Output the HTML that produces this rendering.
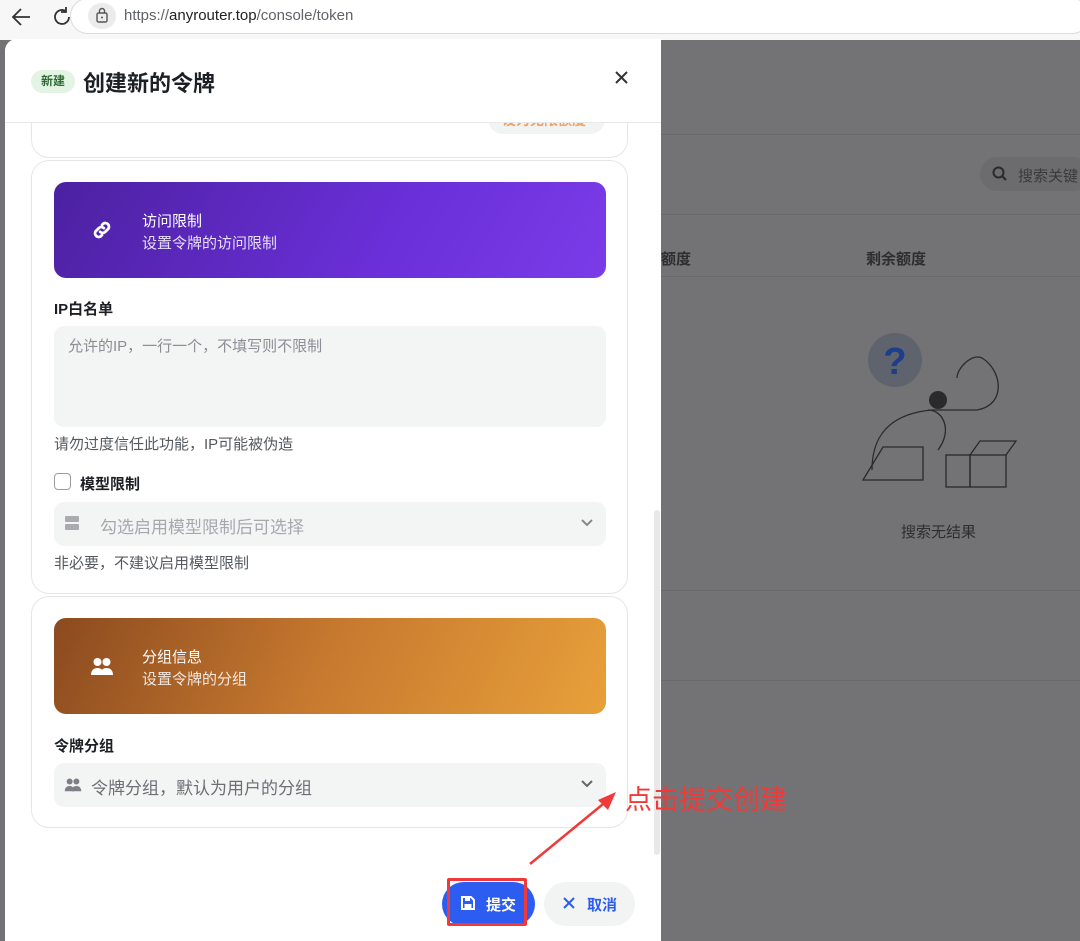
<!DOCTYPE html>
<html><head><meta charset="utf-8"><style>
*{margin:0;padding:0;box-sizing:border-box}
body{width:1080px;height:941px;overflow:hidden;position:relative;background:#737375;font-family:"Liberation Sans","Noto Sans CJK SC",sans-serif;color:#1c1f23}
.a{position:absolute}
.card{position:absolute;left:31px;width:597px;background:#fff;border:1px solid #e6e6e8;border-radius:18px}
.hdr{position:absolute;left:54px;width:552px;height:96px;border-radius:12px;color:#fff}
.hdr .t1{position:absolute;left:88px;top:28px;font-size:15px}
.hdr .t2{position:absolute;left:88px;top:50px;font-size:15px;opacity:.85}
.lbl{font-size:15px;font-weight:bold;color:#1c1f23}
.help{font-size:15px;color:#555a60}
.sel{position:absolute;left:54px;width:552px;height:44px;background:#f3f4f4;border-radius:10px;font-size:17px}
</style></head><body>
<div class="a" style="left:0;top:0;width:1080px;height:40px;background:#f7f7f7"></div>
<svg class="a" style="left:10px;top:6px" width="24" height="22" viewBox="0 0 24 22"><path d="M20 11H4M11 3l-8 8 8 8" fill="none" stroke="#333" stroke-width="1.8"/></svg>
<svg class="a" style="left:50px;top:5px" width="24" height="24" viewBox="0 0 24 24"><path d="M19 12a7 7 0 1 1-3-5.8M16 2v5h-5" fill="none" stroke="#333" stroke-width="1.8"/></svg>
<div class="a" style="left:70px;top:-2px;width:1020px;height:36px;border:1px solid #ddd;border-radius:18px;background:#fff"></div>
<div class="a" style="left:88px;top:3px;width:28px;height:26px;border-radius:13px;background:#ececec"></div>
<svg class="a" style="left:95px;top:7px" width="14" height="16" viewBox="0 0 14 16"><rect x="2" y="6" width="10" height="9" rx="1.5" fill="none" stroke="#555" stroke-width="1.4"/><path d="M4.5 6V4a2.5 2.5 0 0 1 5 0v2" fill="none" stroke="#555" stroke-width="1.4"/><circle cx="7" cy="10.5" r="1" fill="#555"/></svg>
<div class="a" style="left:124px;top:7px;font-size:15px;color:#5f6368">https://<span style="color:#222">anyrouter.top</span>/console/token</div>

<div class="a" style="left:661px;top:134px;width:419px;height:1px;background:#6a6a6c"></div>
<div class="a" style="left:980px;top:157px;width:110px;height:34px;border-radius:17px;background:#6c6c6e"></div>
<svg class="a" style="left:992px;top:166px" width="16" height="16" viewBox="0 0 16 16"><circle cx="6.5" cy="6.5" r="5" fill="none" stroke="#2a2a2c" stroke-width="2"/><path d="M10 10l4 4" stroke="#2a2a2c" stroke-width="2.2"/></svg>
<div class="a" style="left:1018px;top:165px;font-size:15px;color:#3a3a3c;white-space:nowrap">搜索关键</div>
<div class="a" style="left:661px;top:214px;width:419px;height:1px;background:#6a6a6c"></div>
<div class="a" style="left:661px;top:248px;font-size:15px;font-weight:bold;color:#2e2e30">额度</div>
<div class="a" style="left:866px;top:248px;font-size:15px;font-weight:bold;color:#2e2e30">剩余额度</div>
<div class="a" style="left:661px;top:276px;width:419px;height:1px;background:#6a6a6c"></div>
<svg class="a" style="left:860px;top:330px" width="160" height="160" viewBox="0 0 160 160"><circle cx="35" cy="30" r="27" fill="#5e636d"/><text x="35" y="44" font-size="38" font-weight="bold" fill="#1e3e8c" text-anchor="middle" font-family="Liberation Sans">?</text><g fill="none" stroke="#2a2a2c" stroke-width="1.3"><path d="M3 150l20-33 40 0 0 33z"/><path d="M12 140c0-20 5-55 60-60l45 0c30 -5 25-40 5-52-10-5-25 10-25 20"/><path d="M68 80c15 0 25 20 10 40"/><rect x="86" y="125" width="24" height="32"/><rect x="110" y="125" width="36" height="32"/><path d="M110 125l10-14h36l-10 14"/></g><circle cx="78" cy="70" r="9" fill="#2a2a2c"/></svg>
<div class="a" style="left:901px;top:521px;font-size:15px;color:#2e2e30">搜索无结果</div>
<div class="a" style="left:661px;top:590px;width:419px;height:1px;background:#6a6a6c"></div>
<div class="a" style="left:661px;top:680px;width:419px;height:1px;background:#6a6a6c"></div>

<div class="a" style="left:5px;top:39px;width:656px;height:902px;background:#fff;border-radius:12px 0 0 0"></div>
<div class="a" style="left:654px;top:510px;width:6px;height:345px;background:#e8e8e8;border-radius:3px"></div>

<div class="card" style="top:80px;height:78px"></div>
<div class="a" style="left:488px;top:104px;width:117px;height:30px;border-radius:15px;background:#f2f3f3"></div>
<div class="a" style="left:502px;top:110px;font-size:14px;color:#f0a060;font-weight:bold">设为无限额度</div>
<div class="a" style="left:5px;top:39px;width:656px;height:84px;background:#fff;border-bottom:1px solid #e8e8e8;border-radius:12px 0 0 0"></div>
<div class="a" style="left:31px;top:70px;width:44px;height:23px;border-radius:12px;background:#e3f3e4;color:#2e6b33;font-size:12px;font-weight:bold;text-align:center;line-height:23px">新建</div>
<div class="a" style="left:83px;top:66px;font-size:22px;font-weight:bold">创建新的令牌</div>
<svg class="a" style="left:614px;top:70px" width="15" height="15" viewBox="0 0 15 15"><path d="M2 2l11 11M13 2L2 13" stroke="#333" stroke-width="2"/></svg>

<div class="card" style="top:160px;height:434px"></div>
<div class="hdr" style="top:182px;background:linear-gradient(120deg,#4c21a0,#6a2fd8 60%,#7a3ce8)">
<svg class="a" style="left:37px;top:37px" width="22" height="22" viewBox="0 0 24 24"><g fill="none" stroke="#fff" stroke-width="3" stroke-linecap="round"><path d="M10 14a4 4 0 0 0 5.5 0l3.5-3.5a4 4 0 0 0-5.5-5.5L12 6.5"/><path d="M14 10a4 4 0 0 0-5.5 0L5 13.5a4 4 0 0 0 5.5 5.5L12 17.5"/></g></svg>
<div class="t1">访问限制</div><div class="t2">设置令牌的访问限制</div></div>
<div class="a lbl" style="left:54px;top:298px">IP白名单</div>
<div class="a" style="left:54px;top:326px;width:552px;height:101px;background:#f3f4f4;border-radius:10px"></div>
<div class="a" style="left:68px;top:335px;font-size:15px;color:#8a8f95">允许的IP，一行一个，不填写则不限制</div>
<div class="a help" style="left:54px;top:433px">请勿过度信任此功能，IP可能被伪造</div>
<div class="a" style="left:54px;top:473px;width:17px;height:17px;border:1.5px solid #9a9ea4;border-radius:4px"></div>
<div class="a lbl" style="left:80px;top:473px">模型限制</div>
<div class="sel" style="top:502px">
<div class="a" style="left:11px;top:14px;width:14px;height:6px;background:#a8acb1;border-radius:1px"></div>
<div class="a" style="left:11px;top:22px;width:14px;height:6px;background:#a8acb1;border-radius:1px"></div>
<div class="a" style="left:46px;top:11px;color:#a5a9ae">勾选启用模型限制后可选择</div>
<svg class="a" style="left:526px;top:16px" width="14" height="10" viewBox="0 0 14 10"><path d="M2 2l5 5 5-5" fill="none" stroke="#888" stroke-width="2"/></svg></div>
<div class="a help" style="left:54px;top:552px">非必要，不建议启用模型限制</div>

<div class="card" style="top:596px;height:232px"></div>
<div class="hdr" style="top:618px;background:linear-gradient(115deg,#8b4a1f,#c87a2f 50%,#e8a03a)">
<svg class="a" style="left:36px;top:38px" width="24" height="20" viewBox="0 0 24 20"><g fill="#fff"><circle cx="7.5" cy="6" r="4"/><circle cx="16.5" cy="6" r="4"/><path d="M1 19c0-5 3-7 6.5-7s6 2 6 7z"/><path d="M10.5 19c0-5 2.5-7 6-7s6.5 2 6.5 7z"/></g></svg>
<div class="t1">分组信息</div><div class="t2">设置令牌的分组</div></div>
<div class="a lbl" style="left:54px;top:735px">令牌分组</div>
<div class="sel" style="top:763px">
<svg class="a" style="left:10px;top:14px" width="18" height="15" viewBox="0 0 24 20"><g fill="#7d8187"><circle cx="7.5" cy="6" r="4"/><circle cx="16.5" cy="6" r="4"/><path d="M1 19c0-5 3-7 6.5-7s6 2 6 7z"/><path d="M10.5 19c0-5 2.5-7 6-7s6.5 2 6.5 7z"/></g></svg>
<div class="a" style="left:37px;top:11px;color:#6b7075">令牌分组，默认为用户的分组</div>
<svg class="a" style="left:526px;top:16px" width="14" height="10" viewBox="0 0 14 10"><path d="M2 2l5 5 5-5" fill="none" stroke="#666" stroke-width="2"/></svg></div>

<svg class="a" style="left:520px;top:780px" width="110" height="90" viewBox="0 0 110 90"><path d="M10 84L88 20" stroke="#f03a3a" stroke-width="2.5"/><path d="M96 12L78 20 88 30z" fill="#f03a3a"/></svg>
<div class="a" style="left:625px;top:778px;font-size:27px;color:#f03a3a">点击提交创建</div>

<div class="a" style="left:442px;top:882px;width:93px;height:44px;border-radius:22px;background:#2c5df0"></div>
<div class="a" style="left:447px;top:878px;width:80px;height:48px;border:3px solid #f03a3a;border-radius:2px"></div>
<svg class="a" style="left:460px;top:895px" width="16" height="16" viewBox="0 0 16 16"><path d="M2 2h9l3 3v9H2z" fill="none" stroke="#fff" stroke-width="2"/><rect x="5" y="3" width="5" height="3" fill="#fff"/><rect x="4.5" y="9" width="7" height="4" fill="#fff"/></svg>
<div class="a" style="left:486px;top:894px;font-size:15px;font-weight:bold;color:#fff">提交</div>
<div class="a" style="left:544px;top:882px;width:91px;height:44px;border-radius:22px;background:#f2f3f3"></div>
<svg class="a" style="left:562px;top:896px" width="14" height="14" viewBox="0 0 14 14"><path d="M2 2l10 10M12 2L2 12" stroke="#2c5df0" stroke-width="2"/></svg>
<div class="a" style="left:587px;top:894px;font-size:15px;font-weight:bold;color:#2c5df0">取消</div>
</body></html>
